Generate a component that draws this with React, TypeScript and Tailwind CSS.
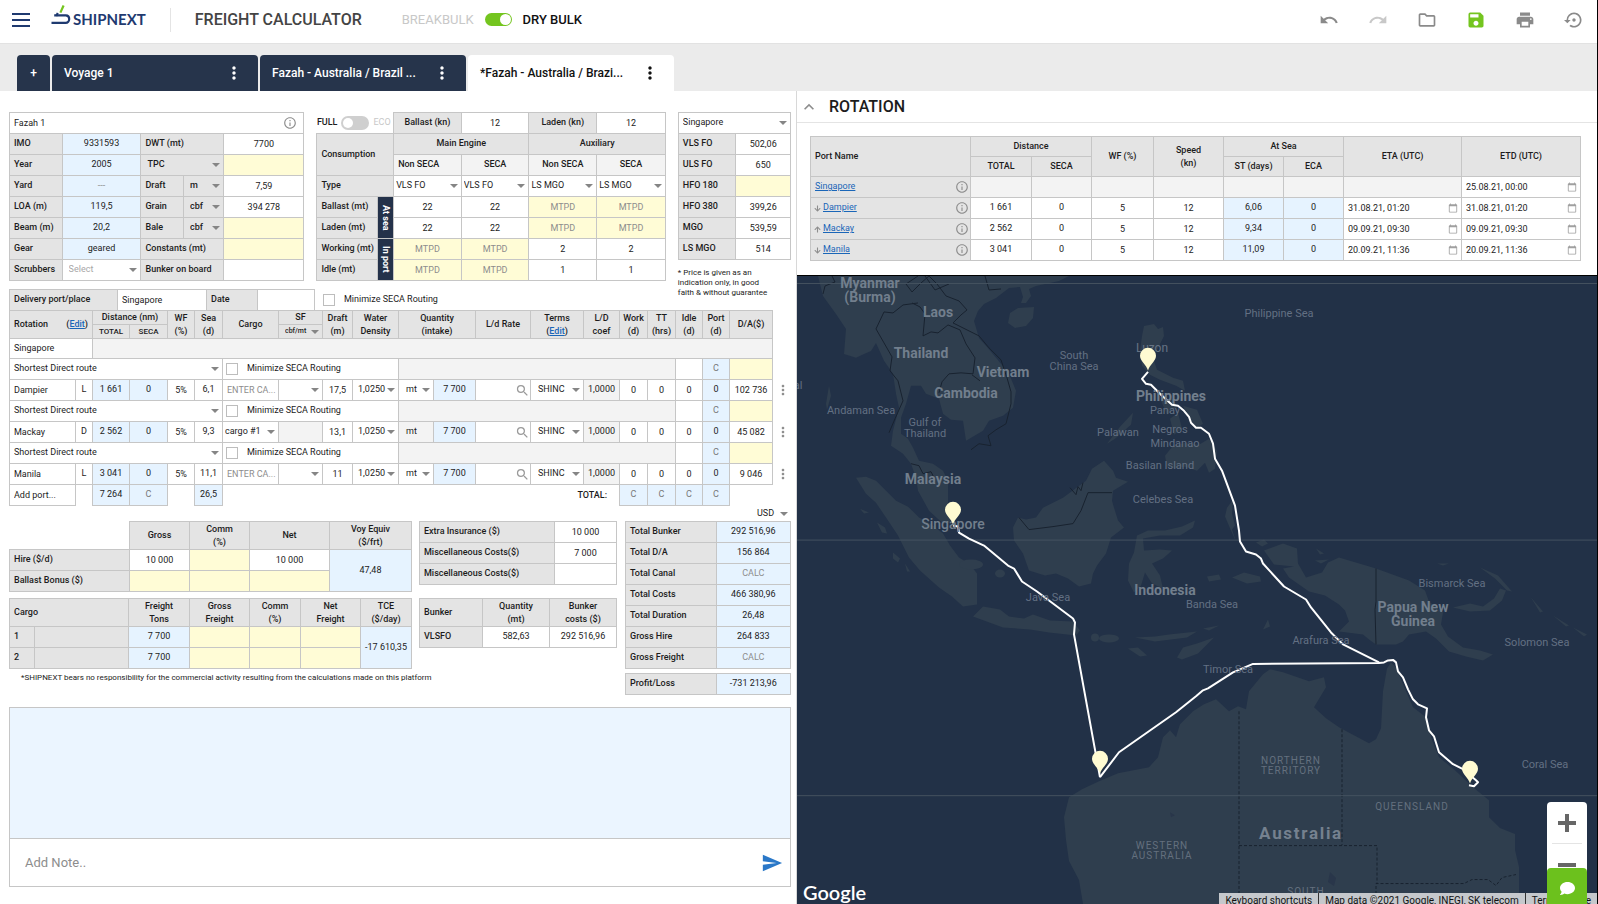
import type { ReactNode } from 'react';
import {
  MdUndo, MdRedo, MdOutlineFolder, MdSave, MdPrint, MdSettingsBackupRestore, MdMoreVert,
  MdInfoOutline, MdSearch, MdCalendarToday, MdSend, MdExpandLess,
} from 'react-icons/md';
import { FaComment, FaArrowUp, FaArrowDown } from 'react-icons/fa';

const tones = {
  head: 'border border-[#c6c6c6] bg-[#e4e4e4]',
  white: 'border border-[#c6c6c6] bg-white',
  blue: 'border border-[#c6c6c6] bg-[#e6f3ff]',
  yellow: 'border border-[#c6c6c6] bg-[#fffcd6]',
  pale: 'border border-[#c6c6c6] bg-[#f3f3f3]',
  none: '',
};
type Tone = keyof typeof tones;
type CellProps = { tone?: Tone; span?: number; rows?: number; className?: string; children?: ReactNode };

function Td({ tone = 'white', span, rows, className = 'text-center', children }: CellProps) {
  return <td colSpan={span} rowSpan={rows} className={`p-0 ${tones[tone]} ${className}`}>{children}</td>;
}

function Th({ tone = 'head', span, rows, className = 'text-center', children }: CellProps) {
  return <th colSpan={span} rowSpan={rows} className={`p-0 font-medium ${tones[tone]} ${className}`}>{children}</th>;
}

function Field({ label, value = '', hint, className = 'text-center' }: { label: string; value?: string; hint?: string; className?: string }) {
  return (
    <input
      aria-label={label}
      defaultValue={value}
      placeholder={hint}
      className={`block h-5 w-full min-w-0 bg-transparent outline-none placeholder:text-[#8d8d8d] ${className}`}
    />
  );
}

function Caret() {
  return (
    <svg viewBox="0 0 8 4" className="pointer-events-none mr-[3px] h-1 w-2 self-center justify-self-end [grid-area:1/1]" aria-hidden="true">
      <path d="M0 0h8L4 4z" fill="#858585" />
    </svg>
  );
}

function Pick({ label, value, className = 'pl-1' }: { label: string; value: string; className?: string }) {
  return (
    <div className="grid h-5 grid-cols-1">
      <select aria-label={label} defaultValue={value} className={`w-full min-w-0 appearance-none bg-transparent outline-none [grid-area:1/1] ${className}`}>
        <option>{value}</option>
      </select>
      <Caret />
    </div>
  );
}

function Cols({ widths }: { widths: string[] }) {
  return <colgroup>{widths.map((w, i) => <col key={i} className={w} />)}</colgroup>;
}

function Check({ label, id, className = 'gap-[9px] pl-1' }: { label: string; id: string; className?: string }) {
  return (
    <div className={`flex items-center ${className}`}>
      <input id={id} type="checkbox" className="size-3 shrink-0 appearance-none border border-[#bdbdbd] bg-white" />
      <label htmlFor={id}>{label}</label>
    </div>
  );
}

const table = 'w-full table-fixed border-collapse';
const left = 'text-left pl-1';

function Logo() {
  return (
    <a href="#home" className="ml-[21px] flex items-center gap-0.5 pb-2" aria-label="Shipnext">
      <svg viewBox="0 0 20 21" className="h-[21px] w-5" aria-hidden="true">
        <path d="M12.6 0.5 9.4 7.6" stroke="#74c51f" strokeWidth="2.2" />
        <path d="M3.2 10.4h11.6c2.2 0 3.4 1.6 3.4 3.6s-1.400 3.900-3.600 3.900H0.500" fill="none" stroke="#1f3a70" strokeWidth="2.2" />
        <path d="M6.800 8 5.200 11" stroke="#1f3a70" strokeWidth="2.200" />
      </svg>
      <span className="pt-[7px] font-['Lato',sans-serif] text-[15px] leading-5 font-bold text-[#1f3a70]">SHIPNEXT</span>
    </a>
  );
}

function Header() {
  const action = 'flex size-6 items-center justify-center text-xl text-[#8a8a8a]';
  return (
    <header className="flex h-11 items-center border-b border-[#e2e2e2] bg-white pr-[11px] pl-3 pb-1">
      <button aria-label="Menu" className="flex w-[18px] flex-col gap-1">
        <span className="h-0.5 bg-[#1f3a70]" />
        <span className="h-0.5 bg-[#1f3a70]" />
        <span className="h-0.5 bg-[#1f3a70]" />
      </button>
      <Logo />
      <h1 className="ml-6 border-l border-[#e4e4e4] pl-6 text-base font-medium text-[#444]">FREIGHT CALCULATOR</h1>
      <label className="ml-10 flex items-center text-[13px] text-[#c8c8c8]">
        BREAKBULK
        <input type="checkbox" role="switch" defaultChecked className="peer sr-only" />
        <span className="mx-[11px] flex h-[13px] w-[27px] justify-end rounded-full bg-[#74c51f] p-px">
          <span className="size-[11px] rounded-full bg-white" />
        </span>
        <span className="font-medium text-[#111]">DRY BULK</span>
      </label>
      <div className="ml-auto flex gap-[25px]">
        <button aria-label="Undo" className={action}><MdUndo /></button>
        <button aria-label="Redo" className="flex size-6 items-center justify-center text-xl text-[#c8c8c8]"><MdRedo /></button>
        <button aria-label="Open" className={action}><MdOutlineFolder /></button>
        <button aria-label="Save" className="flex size-6 items-center justify-center text-xl text-[#74c51f]"><MdSave /></button>
        <button aria-label="Print" className={action}><MdPrint /></button>
        <button aria-label="History" className={action}><MdSettingsBackupRestore /></button>
      </div>
    </header>
  );
}

function Tabs() {
  const dark = 'flex h-9 w-[206px] items-center justify-between rounded-t bg-[#26344b] pl-3 pr-3.5 text-white';
  return (
    <nav className="flex items-end gap-0.5 bg-[#ebebeb] pt-[11px] pl-[17px] text-xs font-medium">
      <button aria-label="New voyage" className="h-9 w-[33px] rounded-t bg-[#26344b] text-white">+</button>
      <button className={dark}>Voyage 1<MdMoreVert className="text-xl" /></button>
      <button className={dark}>Fazah - Australia / Brazil ...<MdMoreVert className="text-xl" /></button>
      <button className="flex h-9 w-[206px] items-center justify-between rounded-t bg-white pr-3.5 pl-3 text-[#111]">
        *Fazah - Australia / Brazi...<MdMoreVert className="text-xl" />
      </button>
    </nav>
  );
}

function VesselTable() {
  return (
    <table className={table}>
      <Cols widths={['w-[52px]', 'w-[78px]', 'w-[42px]', 'w-[40px]', 'w-[79px]']} />
      <tbody>
        <tr className="h-[21px]">
          <Td span={5} className="">
            <div className="flex items-center pr-1.5">
              <Field label="Vessel" value="Fazah 1" className={left} />
              <MdInfoOutline className="size-[14px] shrink-0 text-[#8d8d8d]" />
            </div>
          </Td>
        </tr>
        <tr className="h-[21px]">
          <Th className={left}>IMO</Th><Td tone="blue">9331593</Td><Th span={2} className={left}>DWT (mt)</Th><Td><Field label="DWT" value="7700" /></Td>
        </tr>
        <tr className="h-[21px]">
          <Th className={left}>Year</Th><Td tone="blue">2005</Td>
          <Th span={2}><Pick label="Immersion unit" value="TPC" className="pl-1.5 font-medium" /></Th>
          <Td tone="yellow"><Field label="TPC" /></Td>
        </tr>
        <tr className="h-[21px]">
          <Th className={left}>Yard</Th><Td tone="blue" className="text-center text-[#8d8d8d]">---</Td>
          <Th className={left}>Draft</Th><Th><Pick label="Draft unit" value="m" className="pl-1.5 font-medium" /></Th><Td><Field label="Draft" value="7,59" /></Td>
        </tr>
        <tr className="h-[21px]">
          <Th className={left}>LOA (m)</Th><Td tone="blue">119,5</Td>
          <Th className={left}>Grain</Th><Th><Pick label="Grain unit" value="cbf" className="pl-1.5 font-medium" /></Th><Td><Field label="Grain" value="394 278" /></Td>
        </tr>
        <tr className="h-[21px]">
          <Th className={left}>Beam (m)</Th><Td tone="blue">20,2</Td>
          <Th className={left}>Bale</Th><Th><Pick label="Bale unit" value="cbf" className="pl-1.5 font-medium" /></Th><Td tone="yellow"><Field label="Bale" /></Td>
        </tr>
        <tr className="h-[21px]">
          <Th className={left}>Gear</Th><Td tone="blue">geared</Td><Th span={2} className={left}>Constants (mt)</Th><Td tone="yellow"><Field label="Constants" /></Td>
        </tr>
        <tr className="h-[21px]">
          <Th className={left}>Scrubbers</Th><Td><Pick label="Scrubbers" value="Select" className="pl-1.5 text-[#a8a8a8]" /></Td>
          <Th span={2} className={left}>Bunker on board</Th><Td><Field label="Bunker on board" /></Td>
        </tr>
      </tbody>
    </table>
  );
}

function SideTag({ children }: { children: ReactNode }) {
  return (
    <th rowSpan={2} className="border border-[#c6c6c6] bg-[#24324a] p-0 font-bold text-white">
      <span className="inline-block align-middle leading-none [writing-mode:vertical-rl]">{children}</span>
    </th>
  );
}

function ConsumptionTable() {
  return (
    <table className={table}>
      <Cols widths={['w-[60px]', 'w-[16px]', 'w-[67px]', 'w-[67px]', 'w-[67px]', 'w-[68px]']} />
      <tbody>
        <tr className="h-[21px]">
          <Td tone="none" span={2}>
            <label className="flex items-center gap-1 font-medium">
              FULL
              <input type="checkbox" role="switch" className="sr-only" />
              <span className="flex h-[14px] w-7 shrink-0 rounded-full bg-[#cfcfcf] p-0.5"><span className="size-2.5 rounded-full bg-white" /></span>
              <span className="font-normal text-[#c8c8c8]">ECO</span>
            </label>
          </Td>
          <Th>Ballast (kn)</Th><Td><Field label="Ballast speed" value="12" /></Td><Th>Laden (kn)</Th><Td><Field label="Laden speed" value="12" /></Td>
        </tr>
        <tr className="h-[21px]"><Th span={2} rows={2} className={left}>Consumption</Th><Th span={2}>Main Engine</Th><Th span={2}>Auxiliary</Th></tr>
        <tr className="h-[21px]">
          <Th tone="pale" className="pl-1 text-left">Non SECA</Th><Th tone="pale">SECA</Th><Th tone="pale">Non SECA</Th><Th tone="pale">SECA</Th>
        </tr>
        <tr className="h-[21px]">
          <Th span={2} className={left}>Type</Th>
          {['VLS FO', 'VLS FO', 'LS MGO', 'LS MGO'].map((v, i) => <Td key={i}><Pick label={`Fuel type ${i + 1}`} value={v} className="pl-0.5" /></Td>)}
        </tr>
        {['Ballast (mt)', 'Laden (mt)', 'Working (mt)', 'Idle (mt)'].map((name, r) => (
          <tr key={name} className="h-[21px]">
            <Th className="pl-1 text-left whitespace-nowrap">{name}</Th>
            {r === 0 && <SideTag>At sea</SideTag>}
            {r === 2 && <SideTag>In port</SideTag>}
            {[0, 1, 2, 3].map((c) => {
              const filled = r < 2 ? c < 2 : c > 1;
              const value = filled ? ['22', '22', '2', '1'][r] : '';
              return <Td key={c} tone={filled ? 'white' : 'yellow'}><Field label={`${name} ${c + 1}`} value={value} hint={filled ? undefined : 'MTPD'} /></Td>;
            })}
          </tr>
        ))}
      </tbody>
    </table>
  );
}

function PriceTable() {
  const prices = [['VLS FO', '502,06'], ['ULS FO', '650'], ['HFO 180', ''], ['HFO 380', '399,26'], ['MGO', '539,59'], ['LS MGO', '514']];
  return (
    <div className="min-w-0">
      <table className={table}>
        <Cols widths={['w-[57px]', 'w-[54px]']} />
        <tbody>
          <tr className="h-[21px]"><Td span={2}><Pick label="Bunker port" value="Singapore" /></Td></tr>
          {prices.map(([n, v]) => (
            <tr key={n} className="h-[21px]"><Th className={left}>{n}</Th><Td tone={v ? 'white' : 'yellow'}><Field label={n} value={v} /></Td></tr>
          ))}
        </tbody>
      </table>
      <p className="mt-2 text-[8px] leading-[10px]">* Price is given as an<br />indication only, in good<br />faith &amp; without guarantee</p>
    </div>
  );
}

const legs = [
  { port: 'Dampier', op: 'L', dist: '1 661', sea: '6,1', cargo: '', draft: '17,5', da: '102 736' },
  { port: 'Mackay', op: 'D', dist: '2 562', sea: '9,3', cargo: 'cargo #1', draft: '13,1', da: '45 082' },
  { port: 'Manila', op: 'L', dist: '3 041', sea: '11,1', cargo: '', draft: '11', da: '9 046' },
];

function Leg({ leg }: { leg: (typeof legs)[number] }) {
  const n = leg.port;
  return (
    <>
      <tr className="h-[21px]">
        <Td span={6}><Pick label={`${n} route`} value="Shortest Direct route" /></Td>
        <Td span={4} className="text-left"><Check id={`seca-${n}`} label="Minimize SECA Routing" className="gap-[9px] pl-[3px]" /></Td>
        <Td tone="pale" span={7} />
        <Td /><Td tone="blue" className="text-center text-[#777]">C</Td><Td tone="yellow"><Field label={`${n} canal costs`} /></Td><Td tone="none" />
      </tr>
      <tr className="h-[21px]">
        <Td><Field label="Port" value={n} className={left} /></Td>
        <Td>{leg.op}</Td>
        <Td tone="blue">{leg.dist}</Td><Td tone="blue">0</Td>
        <Td><Field label={`${n} weather factor`} value="5%" /></Td><Td>{leg.sea}</Td>
        <Td>{leg.cargo ? <Pick label={`${n} cargo`} value={leg.cargo} className="pl-0.5" /> : <Field label={`${n} cargo`} hint="ENTER CA..." className="pl-1" />}</Td>
        <Td tone={leg.cargo ? 'pale' : 'white'}>{!leg.cargo && <Pick label={`${n} stowage factor`} value="" />}</Td>
        <Td><Field label={`${n} draft`} value={leg.draft} /></Td>
        <Td><Pick label={`${n} water density`} value="1,0250" className="pl-[5px]" /></Td>
        <Td tone={leg.cargo ? 'pale' : 'white'} className="text-left">{leg.cargo ? <span className="pl-[7px]">mt</span> : <Pick label={`${n} unit`} value="mt" className="pl-[7px]" />}</Td>
        <Td tone="blue">7 700</Td>
        <Td>
          <div className="flex items-center">
            <Field label={`${n} load/discharge rate`} />
            <MdSearch className="size-[15px] shrink-0 text-[#9a9a9a]" />
          </div>
        </Td>
        <Td><Pick label={`${n} terms`} value="SHINC" className="pl-[7px]" /></Td>
        <Td tone="pale">1,0000</Td>
        <Td><Field label={`${n} work days`} value="0" /></Td>
        <Td><Field label={`${n} turn time`} value="0" /></Td>
        <Td><Field label={`${n} idle days`} value="0" /></Td>
        <Td tone="blue">0</Td>
        <Td><Field label={`${n} disbursements`} value={leg.da} /></Td>
        <Td tone="none"><button aria-label={`${n} menu`} className="block pl-0.5 text-[#8d8d8d]"><MdMoreVert className="size-4" /></button></Td>
      </tr>
    </>
  );
}

function Edit() {
  return <>(<a href="#edit" className="text-[#1a66b8] underline">Edit</a>)</>;
}

function RotationTable() {
  return (
    <div>
      <div className="flex items-center gap-2">
        <table className="w-[39%] table-fixed border-collapse">
          <Cols widths={['w-[108px]', 'w-[89px]', 'w-[51px]', 'w-[57px]']} />
          <tbody>
            <tr className="h-[21px]">
              <Th className={left}>Delivery port/place</Th><Td><Field label="Delivery port/place" value="Singapore" className={left} /></Td>
              <Th className={left}>Date</Th><Td><Field label="Date" /></Td>
            </tr>
          </tbody>
        </table>
        <Check id="seca-delivery" label="Minimize SECA Routing" className="gap-[9px]" />
      </div>
      <table className={`-mt-px ${table}`}>
        <Cols widths={['w-[66px]', 'w-[17px]', 'w-[37px]', 'w-[38px]', 'w-[27px]', 'w-[28px]', 'w-[56px]', 'w-[44px]', 'w-[30px]', 'w-[46px]', 'w-[35px]', 'w-[42px]', 'w-[55px]', 'w-[53px]', 'w-[36px]', 'w-[28px]', 'w-[28px]', 'w-[27px]', 'w-[27px]', 'w-[43px]', 'w-[19px]']} />
        <thead className="leading-[13px]">
          <tr className="h-[14px]">
            <Th span={2} rows={2}><div className="flex justify-between px-1">Rotation<span><Edit /></span></div></Th>
            <Th span={2}>Distance (nm)</Th>
            <Th rows={2}>WF<br />(%)</Th><Th rows={2}>Sea<br />(d)</Th><Th rows={2}>Cargo</Th><Th>SF</Th>
            <Th rows={2}>Draft<br />(m)</Th><Th rows={2}>Water<br />Density</Th><Th rows={2} span={2}>Quantity<br />(intake)</Th>
            <Th rows={2}>L/d Rate</Th><Th rows={2}>Terms<br /><Edit /></Th><Th rows={2}>L/D<br />coef</Th>
            <Th rows={2}>Work<br />(d)</Th><Th rows={2}>TT<br />(hrs)</Th><Th rows={2}>Idle<br />(d)</Th><Th rows={2}>Port<br />(d)</Th><Th rows={2}>D/A($)</Th><Td rows={2} tone="none" />
          </tr>
          <tr className="h-[14px] text-[8px]">
            <Th>TOTAL</Th><Th>SECA</Th>
            <Th>
              <div className="grid grid-cols-1">
                <select aria-label="Stowage factor unit" className="w-full appearance-none bg-transparent pl-1.5 text-[7px] font-medium [grid-area:1/1]"><option>cbf/mt</option></select>
                <Caret />
              </div>
            </Th>
          </tr>
        </thead>
        <tbody>
          <tr className="h-5"><Td span={2} className={left}>Singapore</Td><Td tone="pale" span={18} /><Td tone="none" /></tr>
          {legs.map((l) => <Leg key={l.port} leg={l} />)}
          <tr className="h-[21px]">
            <Td><Field label="Add port" value="Add port..." className={left} /></Td><Td tone="none" />
            <Td tone="blue">7 264</Td><Td tone="blue" className="text-center text-[#777]">C</Td><Td tone="none" /><Td tone="blue">26,5</Td>
            <Td tone="none" span={7} />
            <Th tone="none" span={2} className="pr-3 text-right">TOTAL:</Th>
            {[0, 1, 2, 3].map((i) => <Td key={i} tone="blue" className="text-center text-[#777]">C</Td>)}
            <Td tone="none" span={2} />
          </tr>
        </tbody>
      </table>
    </div>
  );
}

function HireTables() {
  return (
    <div className="min-w-0">
      <table className={table}>
        <Cols widths={['w-[120px]', 'w-[60px]', 'w-[60px]', 'w-[80px]', 'w-[82px]']} />
        <tbody>
          <tr className="h-7 leading-[13px]"><Td tone="none" /><Th>Gross</Th><Th>Comm<br />(%)</Th><Th>Net</Th><Th>Voy Equiv<br />($/frt)</Th></tr>
          <tr className="h-[21px]">
            <Th className={left}>Hire ($/d)</Th><Td><Field label="Gross hire" value="10 000" /></Td><Td tone="yellow"><Field label="Hire commission" /></Td>
            <Td><Field label="Net hire" value="10 000" /></Td><Td tone="blue" rows={2}>47,48</Td>
          </tr>
          <tr className="h-[21px]">
            <Th className={left}>Ballast Bonus ($)</Th><Td tone="yellow"><Field label="Gross bonus" /></Td><Td tone="yellow"><Field label="Bonus commission" /></Td><Td tone="yellow"><Field label="Net bonus" /></Td>
          </tr>
        </tbody>
      </table>
      <table className={`mt-1.5 ${table}`}>
        <Cols widths={['w-[25px]', 'w-[94px]', 'w-[61px]', 'w-[60px]', 'w-[51px]', 'w-[60px]', 'w-[51px]']} />
        <tbody>
          <tr className="h-7 leading-[13px]">
            <Th span={2} className={left}>Cargo</Th><Th>Freight<br />Tons</Th><Th>Gross<br />Freight</Th><Th>Comm<br />(%)</Th><Th>Net<br />Freight</Th><Th>TCE<br />($/day)</Th>
          </tr>
          {['1', '2'].map((n) => (
            <tr key={n} className="h-[21px]">
              <Th className={left}>{n}</Th><Th /><Td tone="blue">7 700</Td>
              <Td tone="yellow"><Field label={`Cargo ${n} gross freight`} /></Td><Td tone="yellow"><Field label={`Cargo ${n} commission`} /></Td><Td tone="yellow"><Field label={`Cargo ${n} net freight`} /></Td>
              {n === '1' && <Td tone="blue" rows={2}>-17 610,35</Td>}
            </tr>
          ))}
        </tbody>
      </table>
      <p className="mt-[3px] pl-3 text-[8px] leading-3 whitespace-nowrap">*SHIPNEXT bears no responsibility for the commercial activity resulting from the calculations made on this platform</p>
    </div>
  );
}

function CostTables() {
  const costs = [['Extra Insurance ($)', '10 000'], ['Miscellaneous Costs($)', '7 000'], ['Miscellaneous Costs($)', '']];
  return (
    <div className="min-w-0">
      <table className={table}>
        <Cols widths={['w-[135px]', 'w-[62px]']} />
        <tbody>
          {costs.map(([n, v], i) => <tr key={i} className="h-[21px]"><Th className={left}>{n}</Th><Td><Field label={`${n} ${i + 1}`} value={v} /></Td></tr>)}
        </tbody>
      </table>
      <table className={`mt-[13px] ${table}`}>
        <Cols widths={['w-[63px]', 'w-[67px]', 'w-[67px]']} />
        <tbody>
          <tr className="h-7 leading-[13px]"><Th className={left}>Bunker</Th><Th>Quantity<br />(mt)</Th><Th>Bunker<br />costs ($)</Th></tr>
          <tr className="h-[21px]"><Th className={left}>VLSFO</Th><Td>582,63</Td><Td>292 516,96</Td></tr>
        </tbody>
      </table>
    </div>
  );
}

function TotalTables() {
  const totals = [['Total Bunker', '292 516,96'], ['Total D/A', '156 864'], ['Total Canal', 'CALC'], ['Total Costs', '466 380,96'], ['Total Duration', '26,48'], ['Gross Hire', '264 833'], ['Gross Freight', 'CALC']];
  const row = ([n, v]: string[]) => (
    <tr key={n} className="h-[21px]"><Th className={left}>{n}</Th><Td tone="blue" className={v === 'CALC' ? 'text-center text-[#8d8d8d]' : 'text-center'}>{v}</Td></tr>
  );
  return (
    <div className="min-w-0">
      <table className={table}><Cols widths={['w-[90px]', 'w-[74px]']} /><tbody>{totals.map(row)}</tbody></table>
      <table className={`mt-1 ${table}`}><Cols widths={['w-[90px]', 'w-[74px]']} /><tbody>{row(['Profit/Loss', '-731 213,96'])}</tbody></table>
    </div>
  );
}

function Calculator() {
  return (
    <main className="flex min-w-0 flex-col pt-[21px] pr-[5px] pb-[17px] pl-[9px] text-[9px] text-[#1c1c1c]">
      <div className="grid grid-cols-[295fr_349fr_113fr] items-start gap-3">
        <VesselTable />
        <ConsumptionTable />
        <PriceTable />
      </div>
      <div className="-mt-[9px]"><RotationTable /></div>
      <div className="flex h-[15px] items-center justify-end">
        <div className="grid w-[34px] grid-cols-1">
          <select aria-label="Currency" className="w-full appearance-none bg-transparent outline-none [grid-area:1/1]"><option>USD</option></select>
          <Caret />
        </div>
      </div>
      <div className="grid grid-cols-[402fr_198fr_166fr] items-start gap-2">
        <HireTables />
        <CostTables />
        <TotalTables />
      </div>
      <section className="mt-3 flex flex-1 flex-col border border-[#c6c6c6]">
        <div className="min-h-20 flex-1 bg-[#ebf5ff]" />
        <form className="flex h-12 items-center border-t border-[#c6c6c6] pr-[7px] pl-[15px]">
          <input aria-label="Add note" placeholder="Add Note.." className="min-w-0 flex-1 text-[13px] outline-none placeholder:text-[#8d8d8d]" />
          <button type="button" aria-label="Send"><MdSend className="size-[22px] text-[#2a78c8]" /></button>
        </form>
      </section>
    </main>
  );
}

function DateCell({ label, value }: { label: string; value: string }) {
  return (
    <Td className="">
      <div className="flex items-center pr-[3px]">
        <Field label={label} value={value} className={left} />
        <MdCalendarToday className="size-[10px] shrink-0 text-[#a0a0a0]" />
      </div>
    </Td>
  );
}

function Schedule() {
  const rows = [
    ['Dampier', '1 661', '6,06', '31.08.21, 01:20'],
    ['Mackay', '2 562', '9,34', '09.09.21, 09:30'],
    ['Manila', '3 041', '11,09', '20.09.21, 11:36'],
  ];
  const info = <MdInfoOutline className="ml-auto size-[14px] text-[#8d8d8d]" />;
  return (
    <section className="text-[9px] text-[#1c1c1c]">
      <div className="flex h-8 items-center gap-2.5 border-b border-[#e4e4e4] pl-0.5">
        <button aria-label="Collapse" className="text-[#8d8d8d]"><MdExpandLess className="size-5" /></button>
        <h2 className="text-base leading-5 font-medium">ROTATION</h2>
      </div>
      <div className="pt-[13px] pr-4 pb-[14px] pl-[13px]">
        <table className={table}>
          <Cols widths={['w-[160px]', 'w-[61px]', 'w-[60px]', 'w-[62px]', 'w-[70px]', 'w-[60px]', 'w-[60px]', 'w-[118px]', 'w-[119px]']} />
          <thead>
            <tr className="h-5">
              <Th rows={2} className={left}>Port Name</Th><Th span={2}>Distance</Th><Th rows={2}>WF (%)</Th><Th rows={2} className="text-center leading-[13px]">Speed<br />(kn)</Th>
              <Th span={2}>At Sea</Th><Th rows={2}>ETA (UTC)</Th><Th rows={2}>ETD (UTC)</Th>
            </tr>
            <tr className="h-5"><Th>TOTAL</Th><Th>SECA</Th><Th>ST (days)</Th><Th>ECA</Th></tr>
          </thead>
          <tbody>
            <tr className="h-[21px]">
              <Td tone="head" className=""><div className="flex items-center px-1 pr-px"><a href="#singapore" className="text-[#1a66b8] underline">Singapore</a>{info}</div></Td>
              {[0, 1, 2, 3, 4, 5, 6].map((i) => <Td key={i} tone="pale" />)}
              <DateCell label="Singapore departure" value="25.08.21, 00:00" />
            </tr>
            {rows.map(([p, d, st, date]) => (
              <tr key={p} className="h-[21px]">
                <Td tone="head" className="">
                  <div className="flex items-center gap-0.5 px-[3px] pr-px">
                    {p === 'Mackay' ? <FaArrowUp className="size-[7px] text-[#8d8d8d]" /> : <FaArrowDown className="size-[7px] text-[#8d8d8d]" />}
                    <a href="#port" className="text-[#1a66b8] underline">{p}</a>{info}
                  </div>
                </Td>
                <Td>{d}</Td><Td>0</Td><Td><Field label={`${p} WF`} value="5" /></Td><Td><Field label={`${p} speed`} value="12" /></Td>
                <Td tone="blue">{st}</Td><Td tone="blue">0</Td>
                <DateCell label={`${p} arrival`} value={date} /><DateCell label={`${p} departure`} value={date} />
              </tr>
            ))}
          </tbody>
        </table>
      </div>
    </section>
  );
}

const country = 'text-sm font-bold text-[#727f8d]';
const place = 'text-xs text-[#667384]';
const sea = 'text-[11px] text-[#637083]';
const state = 'text-[10px] tracking-widest text-[#64707e]';
const labels: { x: number; y: number; lines: string[]; style: string }[] = [
  { x: 870, y: 289, lines: ['Myanmar', '(Burma)'], style: country },
  { x: 938, y: 311, lines: ['Laos'], style: country },
  { x: 921, y: 352, lines: ['Thailand'], style: country },
  { x: 1003, y: 371, lines: ['Vietnam'], style: country },
  { x: 966, y: 392, lines: ['Cambodia'], style: country },
  { x: 933, y: 478, lines: ['Malaysia'], style: country },
  { x: 953, y: 523, lines: ['Singapore'], style: 'text-sm font-medium text-[#727f8d]' },
  { x: 1171, y: 395, lines: ['Philippines'], style: country },
  { x: 1165, y: 589, lines: ['Indonesia'], style: country },
  { x: 1413, y: 614, lines: ['Papua New', 'Guinea'], style: country },
  { x: 1074, y: 360, lines: ['South', 'China Sea'], style: sea },
  { x: 1279, y: 312, lines: ['Philippine Sea'], style: sea },
  { x: 861, y: 409, lines: ['Andaman Sea'], style: sea },
  { x: 925, y: 427, lines: ['Gulf of', 'Thailand'], style: sea },
  { x: 1152, y: 347, lines: ['Luzon'], style: place },
  { x: 1118, y: 431, lines: ['Palawan'], style: sea },
  { x: 1165, y: 409, lines: ['Panay'], style: sea },
  { x: 1170, y: 428, lines: ['Negros'], style: sea },
  { x: 1175, y: 442, lines: ['Mindanao'], style: sea },
  { x: 1160, y: 464, lines: ['Basilan Island'], style: sea },
  { x: 1163, y: 498, lines: ['Celebes Sea'], style: sea },
  { x: 1048, y: 597, lines: ['Java Sea'], style: sea },
  { x: 1212, y: 604, lines: ['Banda Sea'], style: sea },
  { x: 1452, y: 582, lines: ['Bismarck Sea'], style: sea },
  { x: 1537, y: 642, lines: ['Solomon Sea'], style: sea },
  { x: 1321, y: 640, lines: ['Arafura Sea'], style: sea },
  { x: 1228, y: 669, lines: ['Timor Sea'], style: sea },
  { x: 1545, y: 764, lines: ['Coral Sea'], style: sea },
  { x: 798, y: 384, lines: ['al'], style: sea },
  { x: 1291, y: 766, lines: ['NORTHERN', 'TERRITORY'], style: state },
  { x: 1412, y: 807, lines: ['QUEENSLAND'], style: state },
  { x: 1162, y: 851, lines: ['WESTERN', 'AUSTRALIA'], style: state },
  { x: 1306, y: 892, lines: ['SOUTH'], style: state },
  { x: 1301, y: 833, lines: ['Australia'], style: 'text-[17px] font-bold tracking-widest text-[#75818f]' },
];

function VoyageMap() {
  const pins = [[1148, 370], [953, 524], [1100, 774], [1470, 784]];
  return (
    <section aria-label="Voyage map" className="relative min-h-[480px] flex-1 overflow-hidden border-t border-black bg-[#223147]">
      <svg viewBox="797 275 800 629" preserveAspectRatio="none" className="absolute inset-0 size-full" aria-hidden="true">
        <g fill="#2f3e4e">
          <path d="M818 275 823 295 836 313 846 328 844 353 856 357 864 353 871 350 876 342 884 360 893 373 896 393 899 407 893 430 891 445 903 453 911 463 916 477 918 490 929 510 943 523 951 522 948 503 948 480 943 470 933 463 919 460 913 447 908 438 901 433 901 417 906 403 911 385 921 385 926 393 939 398 943 413 951 419 963 420 966 440 983 430 989 420 1003 415 1013 407 1016 390 1009 373 996 357 987 346 979 337 974 320 978 310 984 303 996 297 1009 287 1020 286 1023 296 1021 302 1026 302 1031 295 1029 288 1036 285 1059 280 1069 275z" />
          <path d="M1010 312 1018 307 1034 306 1033 317 1026 325 1015 327 1008 322z" />
          <path d="M1144 325 1154 323 1158 328 1163 326 1164 335 1158 347 1153 357 1157 369 1173 377 1183 380 1185 390 1176 385 1160 379 1150 374 1142 365 1140 350 1142 335z" />
          <path d="M1133 412 1131 424 1115 438 1107 443 1120 426zM1161 400l12-2 4 8-10 8zM1170 418l8-6 4 16-8 6zM1183 405l14 4 6 14-6 4-8-10zM1165 455l8-10 12-3 14 2 10-6 8 12-2 18-6 4-4-10-8 8-12-4-10 2-8-2z" />
          <path d="M1013 527 1018 517 1026 519 1036 517 1043 507 1063 497 1086 480 1092 468 1104 460 1113 470 1116 477 1128 481 1113 490 1112 500 1114 507 1118 520 1124 527 1111 537 1106 553 1097 565 1093 573 1091 583 1079 586 1068 578 1056 573 1045 575 1029 570 1023 553 1014 540z" />
          <path d="M856 477 866 476 876 480 886 490 896 500 908 506 919 517 930 523 943 533 950 545 959 557 970 564 977 573 977 604 963 606 952 596 939 587 920 570 909 557 898 535 886 517 876 502 866 493z" />
          <path d="M973 616 983 606 1000 609 1009 616 1024 618 1033 614 1050 620 1073 621 1080 630 1076 635 1049 632 1030 629 1003 627z" />
          <path d="M1137 535 1148 530 1165 530 1182 526 1195 520 1193 527 1180 535 1160 535 1143 538 1144 550 1160 549 1172 550 1163 558 1152 563 1160 575 1163 588 1152 583 1145 572 1141 585 1134 592 1128 580 1129 563 1134 552z" />
          <ellipse cx="971" cy="564" rx="12" ry="5" /><ellipse cx="1000" cy="573" rx="5" ry="4" />
          <path d="M860 508l9 4-5 1zM877 522l8 5 2 6-5-1zM893 552l7 6-2 4-5-4zM905 563l5 8-3 0zM829 385l2 10-4 14-1-6z" />
          <ellipse cx="1095" cy="637" rx="4" ry="4" /><ellipse cx="1109" cy="638" rx="10" ry="4" /><path d="M1135 637l20-1 14-2 28-3-10 6-32 4zM1128 648l10-1 9 8-7 1zM1177 657l6-10 14-4 17-6-16 16-16 6zM1203 628l16-3-10 5zM1263 629l5-10 2 7z" />
          <path d="M1231 530l-6-14 2-9 6-8-1 14 3 12-3 4 4 12zM1232 577l12-5 16 4 1 5-14 2zM1207 576l12-2 2 5-12 2zM1256 542l8-3 4 4-6 3zM1316 548l8 5-4 1zM1315 560l14-1-8 4zM1437 563h12l-6 2z" />
          <path d="M1264 550 1283 543 1297 548 1298 563 1306 577 1322 572 1328 562 1339 557 1376 568 1409 580 1425 590 1429 601 1443 612 1441 624 1448 636 1463 647 1480 650 1493 654 1483 660 1466 656 1449 651 1436 638 1426 631 1409 634 1403 641 1396 644 1376 644 1369 639 1363 634 1339 631 1349 621 1345 610 1339 604 1325 595 1309 591 1289 577 1283 568 1294 566 1274 564z" />
          <path d="M1453 607 1470 603 1483 606 1494 598 1500 588 1506 590 1502 600 1490 610 1470 611zM1480 567l18 8 14 16-5-1-12-12zM1531 597l12 14-3 1zM1553 615l16 10-3 1zM1573 627l14 7-3 2z" />
          <path d="M1083 904 1079 880 1069 861 1066 840 1064 817 1069 797 1082 789 1099 781 1118 773 1149 767 1158 757 1163 737 1170 730 1176 737 1180 724 1193 711 1204 704 1216 699 1229 711 1238 706 1246 709 1249 691 1263 674 1270 669 1283 672 1309 681 1324 677 1326 687 1314 707 1326 718 1339 727 1352 734 1369 743 1376 739 1381 728 1383 691 1387 668 1391 662 1396 667 1403 684 1413 707 1426 717 1432 740 1439 757 1455 770 1473 787 1489 800 1489 817 1500 828 1515 834 1515 850 1519 867 1519 904z" />
        </g>
        <g fill="none" stroke="#18222f" strokeWidth="1">
          <path d="M823 293l2-8 10-4-3-6M918 275l-12 8 6 8 9-9 8-7 8 8 9 12 13 5 8 9-6 5-8 8 10 5 16 8 10 12 12 12 6 18 4 14 0 12-5 20-10 6-8 6 3 10-12-2-8 6M918 302l-15 2-10 8-9-1-8 17 8 14 8 14-2 14 8 10 5 20-8 18-6 14M912 302l8 4 5 7-2 22 8-4 7 1 10-8 12 5 6 14 9 14-2 16-12-1-12 1-7 8-3 11M972 374l8 6M925 275l10 14 14-6M985 275l4 14 12-1" />
          <path d="M1019 517l10 12 24-3 20-3 8-13 7-18 24 0M1070 487l6 7 2-8 3 4 2-8M911 463l8 2 4 8 8-2 3 6" />
          <path d="M1376 568v33l-1 8 1 35" />
          <path strokeDasharray="3 2" d="M1239 711V904M1342 729V845M1239 845.500H1377V883.500M1376 904V883.500H1464l8-4 16 0 8 6 6-8 14-3" />
        </g>
        <g fill="#29364a"><path d="M1330 872l6 6-2 8-6-4zM1170 812l5 3-4 2z" /></g>
        <path d="M797 282.500H1597M797 539.500H1597M797 795.500H1597" stroke="#44515f" />
        <g fill="none" stroke="#ffffff" strokeWidth="2" strokeLinejoin="round">
          <path d="M953 525 958 526 959 532 969 538 984 545 1008 565 1014 568 1022 581 1037 591 1073 618 1075 622 1074 634 1100 777" />
          <path d="M1100 777 1119 752 1176 712 1196 696 1203 690 1208 688 1233 672 1253 663.500 1379 662.500 1384 662 1388 660 1393 659.500 1396 662 1398 671 1403 677 1408 689 1413 699 1418 704 1427 708 1426 717 1429 730 1434 736 1439 752 1453 764 1463 769 1476 780 1478 782 1474 786 1469 785" />
          <path d="M1148 371 1142 378 1146 383 1151 384 1161 394 1172 404 1178 405 1184 410 1189 416 1191 422 1196 427 1201 427 1209 433 1213 443 1215 458 1222 470 1235 505 1239 530 1240 541 1246 551 1256 554 1261 558 1263 563 1284 586 1306 599 1311 607 1331 632 1343 644 1379 662" />
        </g>
      </svg>
      {labels.map((l) => (
        <span
          key={l.lines.join(' ')}
          className={`absolute -translate-x-1/2 -translate-y-1/2 text-center leading-none whitespace-nowrap ${l.style}`}
          style={{ left: `${(l.x - 797) / 8}%`, top: `${(l.y - 275) / 6.29}%` }}
        >
          {l.lines.map((t) => <span key={t} className="block">{t}</span>)}
        </span>
      ))}
      {pins.map(([x, y]) => (
        <svg key={x} viewBox="0 0 18 24" className="absolute h-6 w-[18px] -translate-x-1/2 -translate-y-full" style={{ left: `${(x - 797) / 8}%`, top: `${(y - 275) / 6.29}%` }} aria-hidden="true">
          <path d="M9 23.500C7.500 18 1 14 1 8.800a8 8 0 0 1 16 0C17 14 10.500 18 9 23.500z" fill="#fffbd2" />
        </svg>
      ))}
      <span className="absolute bottom-0 left-1.5 font-['Lato',sans-serif] text-xl leading-6 font-semibold text-white">Google</span>
      <div className="absolute right-0 -bottom-1 flex h-[15px] items-center bg-[#c5c8cc] text-[10px] text-[#111]">
        <button className="px-[6px]">Keyboard shortcuts</button>
        <span className="border-l border-[#333] px-[6px]">Map data ©2021 Google, INEGI, SK telecom</span>
        <a href="#terms" className="border-l border-[#333] px-[6px]">Terms of Use</a>
      </div>
      <div className="absolute right-[10px] bottom-0 flex h-[102px] w-10 flex-col items-center rounded-t-sm bg-white">
        <button aria-label="Zoom in" className="flex h-[41px] w-full items-center justify-center">
          <svg viewBox="0 0 18 18" className="size-[18px]" aria-hidden="true"><path d="M9 0v18M0 9h18" stroke="#666" strokeWidth="4" /></svg>
        </button>
        <span className="h-px w-[30px] bg-[#e4e4e4]" />
        <button aria-label="Zoom out" className="flex h-[41px] w-full items-center justify-center">
          <svg viewBox="0 0 18 18" className="size-[18px]" aria-hidden="true"><path d="M0 9h18" stroke="#666" strokeWidth="4" /></svg>
        </button>
      </div>
      <button aria-label="Chat" className="absolute right-[10px] bottom-0 flex h-9 w-10 items-center justify-center rounded-t bg-[#6cc11d] pt-1 text-white">
        <FaComment className="size-[15px]" />
      </button>
    </section>
  );
}

export default function App() {
  return (
    <div className="flex min-h-screen flex-col border-r border-black bg-white font-['Roboto',sans-serif]">
      <Header />
      <Tabs />
      <div className="grid flex-1 grid-cols-[796fr_801fr]">
        <Calculator />
        <div className="flex min-w-0 flex-col border-l border-[#d8d8d8]">
          <Schedule />
          <VoyageMap />
        </div>
      </div>
    </div>
  );
}
